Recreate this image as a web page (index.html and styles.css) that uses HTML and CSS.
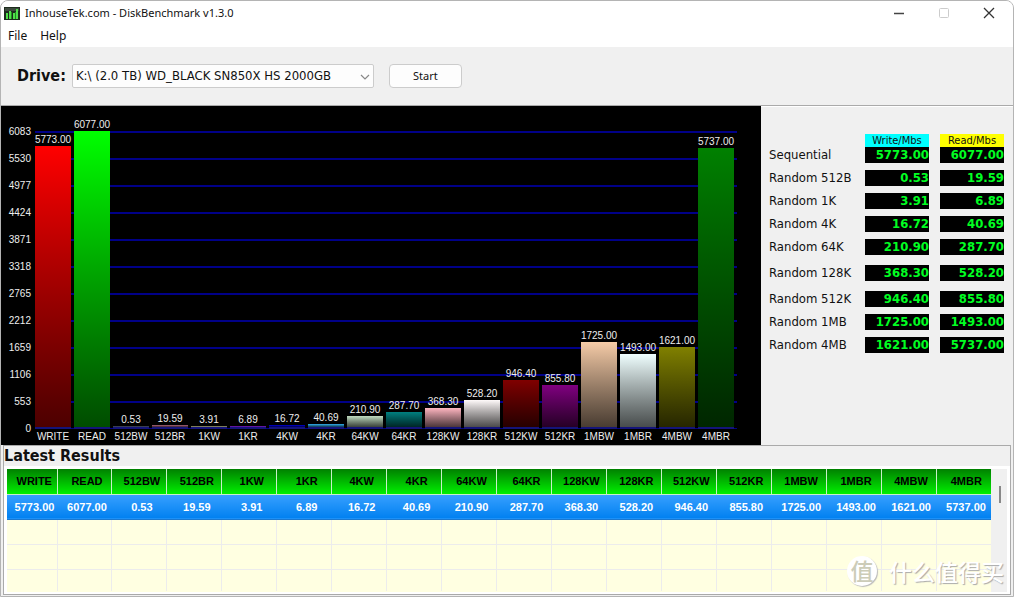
FILE: index.html
```html
<!DOCTYPE html>
<html lang="en">
<head>
<meta charset="utf-8">
<title>InhouseTek.com - DiskBenchmark v1.3.0</title>
<link rel="stylesheet" href="styles.css">
</head>
<body>
<div class="window">
  <header class="titlebar">
    <svg class="app-icon" width="16" height="13" viewBox="0 0 16 13" aria-hidden="true">
      <rect width="16" height="13" fill="#1d2b1d"/>
      <rect x="1" y="1" width="14" height="3" fill="#3c4a3c"/>
      <path d="M2 6h2v6H2zM5 4h2v8H5zM9 6h2v6H9zM12 2h2v10h-2z" fill="#4fe04a"/>
      <path d="M7 5h1v7H7zM11 5h1v7h-1z" fill="#1f8a1f"/>
    </svg>
    <h1 class="title">InhouseTek.com - DiskBenchmark v1.3.0</h1>
    <div class="caption-buttons">
      <button type="button" aria-label="Minimize"><svg width="12" height="12" viewBox="0 0 12 12"><path d="M1 6.5h10" stroke="#444" stroke-width="1.4"/></svg></button>
      <button type="button" aria-label="Maximize" disabled><svg width="12" height="12" viewBox="0 0 12 12"><rect x="1.5" y="1.5" width="9" height="9" rx="1" fill="none" stroke="#ccc"/></svg></button>
      <button type="button" aria-label="Close"><svg width="12" height="12" viewBox="0 0 12 12"><path d="M1 1l10 10M11 1L1 11" stroke="#333" stroke-width="1.3"/></svg></button>
    </div>
  </header>
  <nav class="menubar">
    <button type="button">File</button>
    <button type="button">Help</button>
  </nav>
  <section class="toolbar">
    <label class="drive-label" for="drive">Drive:</label>
    <div class="combo">
      <select id="drive"><option>K:\ (2.0 TB) WD_BLACK SN850X HS 2000GB</option></select>
      <svg class="chevron" width="10" height="6" viewBox="0 0 10 6" aria-hidden="true"><path d="M1 1l4 4 4-4" fill="none" stroke="#888" stroke-width="1.2"/></svg>
    </div>
    <button type="button" class="start">Start</button>
  </section>
  <main class="main">
    <section class="chart" aria-label="Benchmark chart">
      <div class="axis">
        <span>6083</span><span>5530</span><span>4977</span><span>4424</span><span>3871</span><span>3318</span><span>2765</span><span>2212</span><span>1659</span><span>1106</span><span>553</span><span>0</span>
      </div>
      <div class="plot">
        <div class="bars">
          <div class="col"><span>5773.00</span><i class="bar red" style="height:94.9%"></i></div>
          <div class="col"><span>6077.00</span><i class="bar lime" style="height:99.9%"></i></div>
          <div class="col"><span>0.53</span><i class="bar slate" style="height:0.01%"></i></div>
          <div class="col"><span>19.59</span><i class="bar rose" style="height:0.32%"></i></div>
          <div class="col"><span>3.91</span><i class="bar khaki" style="height:0.06%"></i></div>
          <div class="col"><span>6.89</span><i class="bar violet" style="height:0.11%"></i></div>
          <div class="col"><span>16.72</span><i class="bar blue" style="height:0.27%"></i></div>
          <div class="col"><span>40.69</span><i class="bar sky" style="height:0.67%"></i></div>
          <div class="col"><span>210.90</span><i class="bar sage" style="height:3.47%"></i></div>
          <div class="col"><span>287.70</span><i class="bar teal" style="height:4.73%"></i></div>
          <div class="col"><span>368.30</span><i class="bar pink" style="height:6.05%"></i></div>
          <div class="col"><span>528.20</span><i class="bar snow" style="height:8.68%"></i></div>
          <div class="col"><span>946.40</span><i class="bar maroon" style="height:15.56%"></i></div>
          <div class="col"><span>855.80</span><i class="bar purple" style="height:14.07%"></i></div>
          <div class="col"><span>1725.00</span><i class="bar peach" style="height:28.36%"></i></div>
          <div class="col"><span>1493.00</span><i class="bar azure" style="height:24.54%"></i></div>
          <div class="col"><span>1621.00</span><i class="bar olive" style="height:26.65%"></i></div>
          <div class="col"><span>5737.00</span><i class="bar green" style="height:94.31%"></i></div>
        </div>
        <div class="names">
          <span>WRITE</span><span>READ</span><span>512BW</span><span>512BR</span><span>1KW</span><span>1KR</span><span>4KW</span><span>4KR</span><span>64KW</span><span>64KR</span><span>128KW</span><span>128KR</span><span>512KW</span><span>512KR</span><span>1MBW</span><span>1MBR</span><span>4MBW</span><span>4MBR</span>
        </div>
      </div>
    </section>
    <aside class="summary">
      <table class="scores">
        <thead><tr><td></td><th scope="col"><span class="write">Write/Mbs</span></th><th scope="col"><span class="read">Read/Mbs</span></th></tr></thead>
        <tbody>
          <tr class="first"><th scope="row">Sequential</th><td><b>5773.00</b></td><td><b>6077.00</b></td></tr>
          <tr><th scope="row">Random 512B</th><td><b>0.53</b></td><td><b>19.59</b></td></tr>
          <tr><th scope="row">Random 1K</th><td><b>3.91</b></td><td><b>6.89</b></td></tr>
          <tr><th scope="row">Random 4K</th><td><b>16.72</b></td><td><b>40.69</b></td></tr>
          <tr><th scope="row">Random 64K</th><td><b>210.90</b></td><td><b>287.70</b></td></tr>
          <tr class="loose"><th scope="row">Random 128K</th><td><b>368.30</b></td><td><b>528.20</b></td></tr>
          <tr class="loose"><th scope="row">Random 512K</th><td><b>946.40</b></td><td><b>855.80</b></td></tr>
          <tr><th scope="row">Random 1MB</th><td><b>1725.00</b></td><td><b>1493.00</b></td></tr>
          <tr><th scope="row">Random 4MB</th><td><b>1621.00</b></td><td><b>5737.00</b></td></tr>
        </tbody>
      </table>
    </aside>
  </main>
  <section class="results">
    <h2>Latest Results</h2>
    <div class="grid-frame">
      <div class="grid-body">
        <table class="history">
          <colgroup><col class="narrow"><col span="17"></colgroup>
          <thead><tr><th>WRITE</th><th>READ</th><th>512BW</th><th>512BR</th><th>1KW</th><th>1KR</th><th>4KW</th><th>4KR</th><th>64KW</th><th>64KR</th><th>128KW</th><th>128KR</th><th>512KW</th><th>512KR</th><th>1MBW</th><th>1MBR</th><th>4MBW</th><th>4MBR</th></tr></thead>
          <tbody>
            <tr class="selected"><td>5773.00</td><td>6077.00</td><td>0.53</td><td>19.59</td><td>3.91</td><td>6.89</td><td>16.72</td><td>40.69</td><td>210.90</td><td>287.70</td><td>368.30</td><td>528.20</td><td>946.40</td><td>855.80</td><td>1725.00</td><td>1493.00</td><td>1621.00</td><td>5737.00</td></tr>
            <tr><td></td><td></td><td></td><td></td><td></td><td></td><td></td><td></td><td></td><td></td><td></td><td></td><td></td><td></td><td></td><td></td><td></td><td></td></tr>
            <tr><td></td><td></td><td></td><td></td><td></td><td></td><td></td><td></td><td></td><td></td><td></td><td></td><td></td><td></td><td></td><td></td><td></td><td></td></tr>
            <tr class="last"><td></td><td></td><td></td><td></td><td></td><td></td><td></td><td></td><td></td><td></td><td></td><td></td><td></td><td></td><td></td><td></td><td></td><td></td></tr>
          </tbody>
        </table>
      </div>
      <div class="scrollbar"><div class="thumb"></div></div>
    </div>
  </section>
  <div class="watermark" lang="zh"><span class="seal">值</span><span>什么值得买</span></div>
</div>
</body>
</html>
```
FILE: styles.css
```css
* { box-sizing: border-box; }

body {
  margin: 0;
  background: #fff;
  color: #111;
  font: 13px/16px "DejaVu Sans Condensed", "DejaVu Sans", sans-serif;
}

button { font: inherit; color: inherit; background: none; border: 0; padding: 0; }

.window {
  position: relative;
  display: flex;
  flex-direction: column;
  min-height: 100vh;
  border: 1px solid #b4b4b4;
  border-radius: 8px 8px 0 0;
  background: #f0f0f0;
  overflow: hidden;
}

.titlebar {
  display: flex;
  align-items: center;
  gap: 5px;
  height: 24px;
  padding: 0 18px 0 3px;
  background: #fff;
}

.title { margin: 0; flex: 1; font: 11px/16px "Noto Sans", sans-serif; }
.caption-buttons { display: flex; gap: 33px; }
.caption-buttons button { display: flex; width: 12px; height: 12px; }

.menubar {
  display: flex;
  gap: 13px;
  height: 22px;
  padding: 2px 7px;
  background: #fff;
  font: 12px/16px "Noto Sans", sans-serif;
}

.toolbar {
  display: flex;
  align-items: center;
  height: 59px;
  padding: 0 16px;
  border-bottom: 1px solid #aaa;
}

.drive-label { font-size: 16px; line-height: 24px; font-weight: bold; margin-right: 6px; }

.combo { position: relative; width: 302px; height: 24px; margin-right: 15px; }
.combo select {
  appearance: none;
  width: 100%;
  height: 100%;
  padding: 0 3px;
  border: 1px solid #ccc;
  border-radius: 2px;
  background: #fdfdfd;
  color: #111;
  font: inherit;
}
.chevron { position: absolute; right: 4px; top: 10px; }

.start {
  width: 73px;
  height: 24px;
  border: 1px solid #ccc;
  border-radius: 4px;
  background: #fdfdfd;
  font: 11px/16px "Noto Sans", sans-serif;
}

.main { display: grid; grid-template-columns: minmax(0, 1fr) 252px; }

.chart {
  display: flex;
  gap: 4px;
  padding: 12px 24px 0 0;
  background: #000;
  color: #eee;
  font: 10px/13px "Liberation Sans", Arial, sans-serif;
}

.axis { width: 30px; display: flex; flex-direction: column; text-align: right; }
.axis span { line-height: 27px; }

.plot { flex: 1; min-width: 0; padding-top: 13px; }

.bars, .names { display: grid; grid-template-columns: repeat(18, minmax(0, 1fr)); }
.bars {
  height: 298px;
  background: repeating-linear-gradient(#000088 0 2px, transparent 2px 27px);
}
.names span { text-align: center; line-height: 16px; padding-right: 3px; }

.col {
  display: flex;
  flex-direction: column;
  justify-content: flex-end;
  align-items: center;
  height: 298px;
  padding: 0 3px 3px 0;
}
.col span { white-space: nowrap; }

.bar {
  box-sizing: content-box;
  flex-shrink: 0;
  width: 100%;
  margin-bottom: -3px;
  padding-top: 1px;
  border-bottom: 2px solid #14147a;
  background: linear-gradient(var(--tone), color-mix(in srgb, var(--tone) 30%, #000));
}
.red { --tone: #ff0000; }
.lime { --tone: #00ff00; }
.slate { --tone: #5a6480; }
.rose { --tone: #b06880; }
.khaki { --tone: #c8c890; }
.violet { --tone: #9a20ff; }
.blue { --tone: #0000e0; }
.sky { --tone: #30b0f0; }
.sage { --tone: #c0dcc0; }
.teal { --tone: #008080; }
.pink { --tone: #ffb6c1; }
.snow { --tone: #fffafa; }
.maroon { --tone: #800000; }
.purple { --tone: #800080; }
.peach { --tone: #f5cba7; }
.azure { --tone: #f0ffff; }
.olive { --tone: #808000; }
.green { --tone: #008000; }

.summary { padding: 27px 9px 0 8px; border-top: 1px solid #fff; }

.scores { width: 100%; border-collapse: collapse; table-layout: fixed; }
.scores th, .scores td { padding: 0 0 0 11px; width: 75px; vertical-align: bottom; font-weight: normal; }
.scores tr > :first-child { width: auto; padding: 0; text-align: left; white-space: nowrap; }
.scores tbody tr { height: 23px; }
.scores tbody tr.first { height: 16px; }
.scores tbody tr.loose { height: 26px; }
.scores span { display: block; font-size: 11px; line-height: 13px; text-align: center; }
.write { background: #0ff; }
.read { background: #ff0; }
.scores b {
  display: block;
  height: 16px;
  background: #000;
  color: #0f2;
  line-height: 16px;
  text-align: right;
}

.results {
  flex: 1;
  display: flex;
  flex-direction: column;
  margin: 0 2px 1px;
  border: 1px solid #aaa;
}
.results h2 { margin: 0; font-size: 16px; line-height: 20px; }

.grid-frame { flex: 1; display: flex; padding: 3px 3px 2px; background: #fff; }
.grid-body { flex: 1; min-width: 0; background: #ffffe1; }

.history {
  width: 100%;
  border-collapse: collapse;
  table-layout: fixed;
  font: bold 11px/16px "Liberation Sans", Arial, sans-serif;
}
.history .narrow { width: 50px; }
.history th, .history td {
  height: 25px;
  padding: 0 0 0 5px;
  text-align: center;
  border: solid #ececec;
  border-width: 0 1px 1px 0;
}
.history th { border-color: #c8f0c8; background: linear-gradient(#008000, #00f000); color: #000; }
.history .selected td { border-color: #1a78d0; border-right-width: 0; background: linear-gradient(#38a0ff, #0080f0); color: #fff; }
.history .last td { height: 22px; border-bottom: 0; }
.history th:last-child, .history td:last-child { border-right: 0; }

.scrollbar { width: 16px; padding: 17px 0 0 8px; background: #f0f0f0; }
.thumb { width: 2px; height: 17px; background: #888; }

.watermark {
  position: absolute;
  right: 9px;
  bottom: 9px;
  display: flex;
  align-items: center;
  gap: 12px;
  color: #fff;
  font: 500 23px/32px "Noto Sans CJK SC", sans-serif;
  text-shadow: 1px 1px 1px #aaa;
}
.seal {
  width: 30px;
  height: 30px;
  border-radius: 50%;
  background: #fff;
  box-shadow: 1px 1px 1px #bbb;
  color: #ccccb8;
  line-height: 29px;
  text-align: center;
  text-shadow: none;
}
```
